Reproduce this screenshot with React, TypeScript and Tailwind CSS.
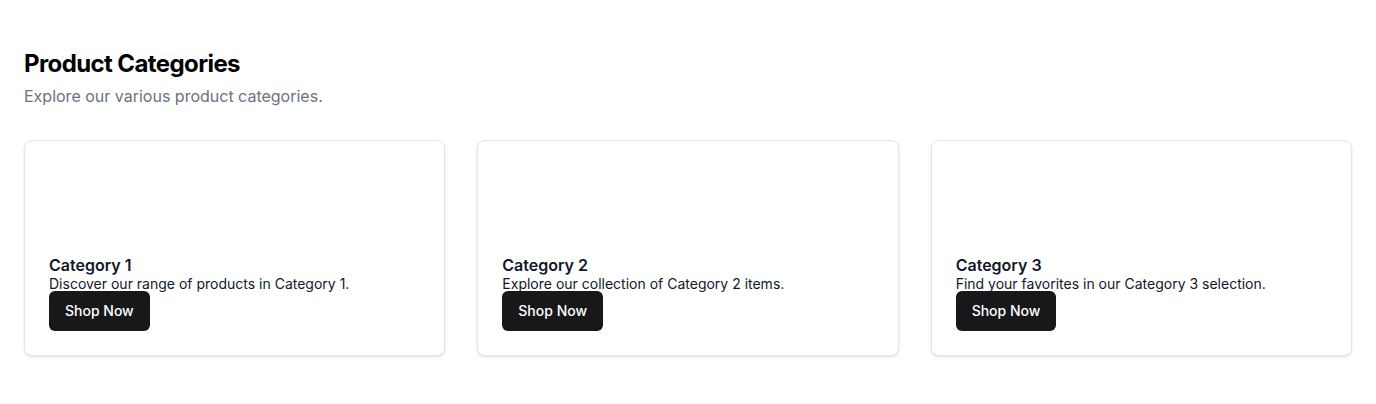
import React from "react";

interface Category {
  title: string;
  description: string;
}

const categories: Category[] = [
  { title: "Category 1", description: "Discover our range of products in Category 1." },
  { title: "Category 2", description: "Explore our collection of Category 2 items." },
  { title: "Category 3", description: "Find your favorites in our Category 3 selection." },
];

const CategoryCard: React.FC<{ category: Category }> = ({ category }) => (
  <div className="rounded-lg border border-gray-200 bg-white p-6 shadow-sm">
    <div className="h-[88px]" />
    <h3 className="text-base font-semibold leading-6 text-gray-900">{category.title}</h3>
    <p className="text-sm leading-none text-gray-900">{category.description}</p>
    <button className="h-10 rounded-md bg-zinc-900 px-4 text-sm font-medium text-white">
      Shop Now
    </button>
  </div>
);

export default function App() {
  return (
    <div className="min-h-screen bg-white px-6 py-12 font-['Inter',sans-serif] text-black">
      <h2 className="text-2xl font-bold leading-8 tracking-tight">Product Categories</h2>
      <p className="mt-1 text-base text-gray-500">Explore our various product categories.</p>
      <div className="mt-8 grid grid-cols-3 gap-8">
        {categories.map((c) => (
          <CategoryCard key={c.title} category={c} />
        ))}
      </div>
    </div>
  );
}
